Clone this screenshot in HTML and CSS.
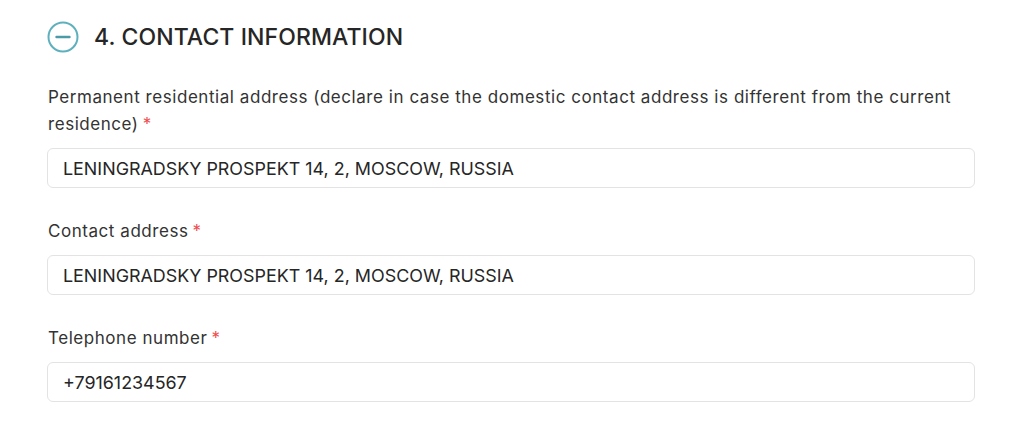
FILE: index.html
```html
<!DOCTYPE html>
<html>
<head>
<meta charset="utf-8">
<link rel="stylesheet" href="styles.css">
</head>
<body>
<section class="section">
  <h2 class="section-title">
    <span class="toggle"><svg width="32" height="32" viewBox="0 0 32 32"><circle cx="16" cy="16" r="14.5" fill="none" stroke="#5fb0bd" stroke-width="2"/><line x1="9.5" y1="16" x2="22.5" y2="16" stroke="#4a9aa8" stroke-width="2.4" stroke-linecap="round"/></svg></span>
    4. CONTACT INFORMATION
  </h2>
  <div class="field">
    <label class="label">Permanent residential address (declare in case the domestic contact address is different from the current residence)<span class="req">*</span></label>
    <div class="input">LENINGRADSKY PROSPEKT 14, 2, MOSCOW, RUSSIA</div>
  </div>
  <div class="field">
    <label class="label">Contact address<span class="req">*</span></label>
    <div class="input">LENINGRADSKY PROSPEKT 14, 2, MOSCOW, RUSSIA</div>
  </div>
  <div class="field">
    <label class="label">Telephone number<span class="req">*</span></label>
    <div class="input">+79161234567</div>
  </div>
</section>
</body>
</html>
```
FILE: styles.css
```css
html, body { margin: 0; padding: 0; background: #fff; }
body { font-family: Inter, "Noto Sans", sans-serif; color: #2b2b2b; }
.section { width: 928px; padding: 21px 0 0 47px; }
.section-title {
  margin: 0 0 31px 0;
  display: flex; align-items: center; gap: 15px;
  font-size: 23px; font-weight: 500; letter-spacing: 0.1px;
  height: 32px; color: #262626;
}
.toggle { display: flex; width: 32px; height: 32px; }
.field { display: flex; flex-direction: column; gap: 10px; margin-bottom: 30px; }
.label { font-size: 17px; line-height: 27px; letter-spacing: 0.55px; color: #333; padding-left: 1px; }
.req { display: inline-block; color: #ef4b4b; margin-left: 4px; letter-spacing: 0; }
.input {
  height: 38px; box-sizing: content-box;
  border: 1px solid #e3e3e3; border-radius: 6px;
  padding: 0 15px; display: flex; align-items: center;
  font-size: 17.9px; color: #262626;
}
```
